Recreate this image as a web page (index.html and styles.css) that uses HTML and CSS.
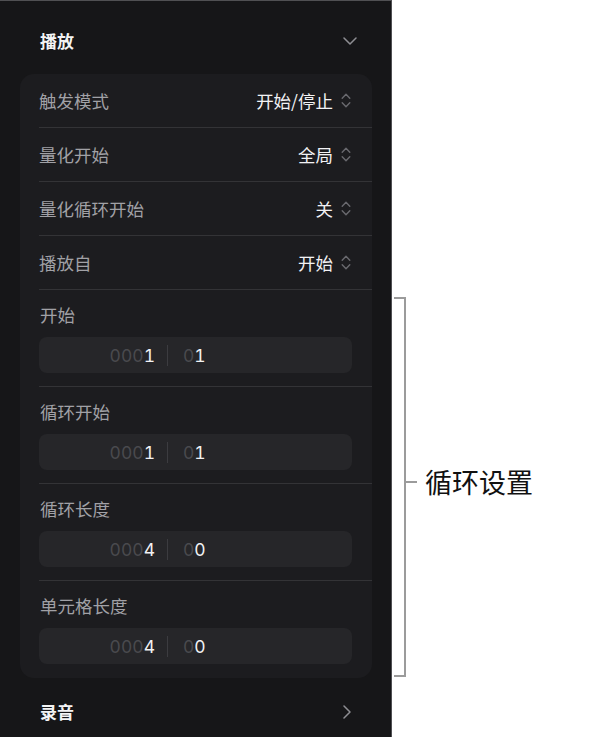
FILE: index.html
```html
<!DOCTYPE html>
<html lang="zh-CN">
<head>
<meta charset="utf-8">
<title>播放</title>
<link rel="stylesheet" href="styles.css">
</head>
<body>
<div class="page">
  <aside class="panel">
    <div class="head">
      <span class="head-title">播放</span>
      <svg class="chev-down" width="14" height="8" viewBox="0 0 14 8"><path d="M1 1 L7 7 L13 1" fill="none" stroke="#8e8e93" stroke-width="1.5" stroke-linecap="round" stroke-linejoin="round"/></svg>
    </div>
    <div class="card">
      <div class="row">
        <span class="label">触发模式</span>
        <span class="value">开始/停止<svg class="updown" width="10" height="15" viewBox="0 0 10 15"><path d="M1.2 5.2 L5 1.2 L8.8 5.2 M1.2 9.8 L5 13.8 L8.8 9.8" fill="none" stroke="#69696e" stroke-width="1.4" stroke-linecap="round" stroke-linejoin="round"/></svg></span>
      </div>
      <div class="row">
        <span class="label">量化开始</span>
        <span class="value">全局<svg class="updown" width="10" height="15" viewBox="0 0 10 15"><path d="M1.2 5.2 L5 1.2 L8.8 5.2 M1.2 9.8 L5 13.8 L8.8 9.8" fill="none" stroke="#69696e" stroke-width="1.4" stroke-linecap="round" stroke-linejoin="round"/></svg></span>
      </div>
      <div class="row">
        <span class="label">量化循环开始</span>
        <span class="value">关<svg class="updown" width="10" height="15" viewBox="0 0 10 15"><path d="M1.2 5.2 L5 1.2 L8.8 5.2 M1.2 9.8 L5 13.8 L8.8 9.8" fill="none" stroke="#69696e" stroke-width="1.4" stroke-linecap="round" stroke-linejoin="round"/></svg></span>
      </div>
      <div class="row">
        <span class="label">播放自</span>
        <span class="value">开始<svg class="updown" width="10" height="15" viewBox="0 0 10 15"><path d="M1.2 5.2 L5 1.2 L8.8 5.2 M1.2 9.8 L5 13.8 L8.8 9.8" fill="none" stroke="#69696e" stroke-width="1.4" stroke-linecap="round" stroke-linejoin="round"/></svg></span>
      </div>
      <div class="section">
        <div class="label">开始</div>
        <div class="field">
          <span class="bar"><span class="dim">000</span>1</span>
          <span class="divider"></span>
          <span class="beat"><span class="dim">0</span>1</span>
        </div>
      </div>
      <div class="section">
        <div class="label">循环开始</div>
        <div class="field">
          <span class="bar"><span class="dim">000</span>1</span>
          <span class="divider"></span>
          <span class="beat"><span class="dim">0</span>1</span>
        </div>
      </div>
      <div class="section">
        <div class="label">循环长度</div>
        <div class="field">
          <span class="bar"><span class="dim">000</span>4</span>
          <span class="divider"></span>
          <span class="beat"><span class="dim">0</span>0</span>
        </div>
      </div>
      <div class="section last">
        <div class="label">单元格长度</div>
        <div class="field">
          <span class="bar"><span class="dim">000</span>4</span>
          <span class="divider"></span>
          <span class="beat"><span class="dim">0</span>0</span>
        </div>
      </div>
    </div>
    <div class="foot">
      <span class="head-title">录音</span>
      <svg class="chev-right" width="8" height="14" viewBox="0 0 8 14"><path d="M1 1 L7 7 L1 13" fill="none" stroke="#8e8e93" stroke-width="1.5" stroke-linecap="round" stroke-linejoin="round"/></svg>
    </div>
  </aside>
  <div class="annot">
    <div class="bracket"></div>
    <div class="callout">
      <span class="tick"></span>
      <span class="callout-text">循环设置</span>
    </div>
  </div>
</div>
</body>
</html>
```
FILE: styles.css
```css
* { box-sizing: border-box; }
html, body {
  margin: 0;
  padding: 0;
  background: #ffffff;
}
body {
  font-family: "Inter", "Noto Sans CJK SC", sans-serif;
}
.page {
  display: flex;
  width: 614px;
  height: 737px;
  overflow: hidden;
}
.panel {
  width: 392px;
  height: 737px;
  flex: none;
  background: #161618;
  border-top: 1px solid #505053;
  border-right: 1px solid #505053;
  display: flex;
  flex-direction: column;
}
.head {
  display: flex;
  align-items: center;
  justify-content: space-between;
  height: 73px;
  padding: 6px 34px 0 40px;
}
.head-title {
  font-family: "Noto Sans CJK SC", sans-serif;
  font-weight: 700;
  font-size: 17px;
  color: #f4f4f5;
  line-height: 24px;
}
.chev-down { display: block; }
.card {
  margin: 0 19px 0 20px;
  background: #1c1c1f;
  border-radius: 14px;
  overflow: hidden;
}
.row {
  height: 54px;
  margin-left: 19px;
  padding-right: 21px;
  border-bottom: 1px solid #333336;
  display: flex;
  align-items: center;
  justify-content: space-between;
}
.label {
  font-family: "Noto Sans CJK SC", sans-serif;
  font-size: 17.5px;
  line-height: 22px;
  color: #a1a1a6;
}
.value {
  font-family: "Noto Sans CJK SC", sans-serif;
  font-size: 17.5px;
  line-height: 22px;
  color: #f2f2f4;
  display: flex;
  align-items: center;
}
.updown { display: block; margin-left: 8px; }
.section {
  margin-left: 19px;
  padding: 14px 20px 13px 0;
  border-bottom: 1px solid #333336;
}
.section .label { margin-left: 1px; }
.section.last {
  border-bottom: 0;
  padding-bottom: 14px;
}
.field {
  margin-top: 11px;
  height: 36px;
  background: #262629;
  border-radius: 8px;
  display: flex;
  align-items: center;
  font-family: "Inter", sans-serif;
  font-size: 17.5px;
  color: #f2f2f4;
  font-variant-numeric: tabular-nums;
}
.bar {
  width: 116px;
  text-align: right;
}
.dim { color: #4a4a4e; }
.divider {
  width: 1px;
  height: 21px;
  background: #3c3c40;
  margin: 0 15px 0 12px;
}
.foot {
  display: flex;
  align-items: center;
  justify-content: space-between;
  padding: 10px 40px 0 40px;
  height: 58px;
}
.chev-right { display: block; }
.annot {
  display: flex;
  align-items: flex-start;
  padding-top: 297px;
}
.bracket {
  margin-left: 2px;
  width: 12px;
  height: 380px;
  border: 2px solid #9b9b9b;
  border-left: 0;
  flex: none;
}
.callout {
  display: flex;
  align-items: center;
  margin-top: 170px;
  height: 30px;
}
.tick {
  width: 11px;
  height: 2px;
  background: #9b9b9b;
}
.callout-text {
  margin-left: 8px;
  font-family: "Noto Sans CJK SC", sans-serif;
  font-size: 27px;
  line-height: 30px;
  color: #111111;
}
```
